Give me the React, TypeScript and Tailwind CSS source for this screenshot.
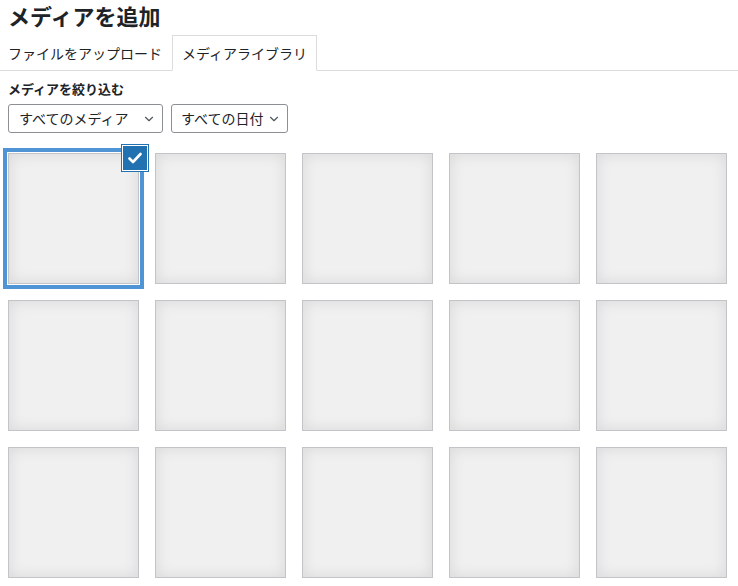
import { ChevronDown } from 'lucide-react'

const font = { fontFamily: '"Noto Sans CJK JP", "Noto Sans", sans-serif' }

function Tile({ selected }: { selected?: boolean }) {
  return (
    <div
      className={`relative w-[131px] h-[131px] bg-[#f0f0f0] border border-[#c3c4c7] shadow-[inset_0_0_15px_rgba(0,0,0,0.1)] ${
        selected ? 'outline outline-1 outline-white ring-[5px] ring-[#4f94d4]' : ''
      }`}
    >
      {selected && (
        <div className="absolute -top-[8px] -right-[9px] w-[24px] h-[24px] bg-[#2271b1] flex items-center justify-center shadow-[0_0_0_1px_#fff,0_0_0_2px_#2271b1]">
          <svg width="14" height="12" viewBox="0 0 14 12" fill="none">
            <path d="M1.5 6.5 L5 10 L12.5 2" stroke="white" strokeWidth="2.6" strokeLinecap="round" strokeLinejoin="round" />
          </svg>
        </div>
      )}
    </div>
  )
}

export default function App() {
  return (
    <div className="w-[738px] h-[586px] bg-white text-[#1d2327] overflow-hidden" style={font}>
      <h1 className="px-2 text-[22px] font-bold leading-[30px]">メディアを追加</h1>

      {/* Tabs */}
      <div className="mt-[5px] flex border-b border-[#dcdcde] h-[36px]">
        <button className="pl-2 pr-[10px] text-[14px] text-[#1d2327] leading-[34px]">ファイルをアップロード</button>
        <button className="px-[9px] text-[14px] text-[#1d2327] leading-[34px] border border-[#dcdcde] border-b-white bg-white -mb-px h-[36px]">
          メディアライブラリ
        </button>
      </div>

      {/* Filters */}
      <div className="px-2 pt-[8px]">
        <div className="text-[13px] font-bold leading-[20px]">メディアを絞り込む</div>
        <div className="mt-[5px] flex gap-2">
          <div className="w-[155px] h-[29px] border border-[#8c8f94] rounded-[3px] flex items-center justify-between pl-[10px] pr-[6px] text-[14px]">
            <span>すべてのメディア</span>
            <ChevronDown className="w-[14px] h-[14px] text-[#50575e]" strokeWidth={2} />
          </div>
          <div className="w-[117px] h-[29px] border border-[#8c8f94] rounded-[3px] flex items-center justify-between pl-[9px] pr-[6px] text-[14px]">
            <span>すべての日付</span>
            <ChevronDown className="w-[14px] h-[14px] text-[#50575e]" strokeWidth={2} />
          </div>
        </div>
      </div>

      {/* Grid */}
      <div className="pl-2 pt-[20px] grid grid-cols-[repeat(5,131px)] gap-x-[16px] gap-y-[16px]">
        {Array.from({ length: 15 }).map((_, i) => (
          <Tile key={i} selected={i === 0} />
        ))}
      </div>
    </div>
  )
}
